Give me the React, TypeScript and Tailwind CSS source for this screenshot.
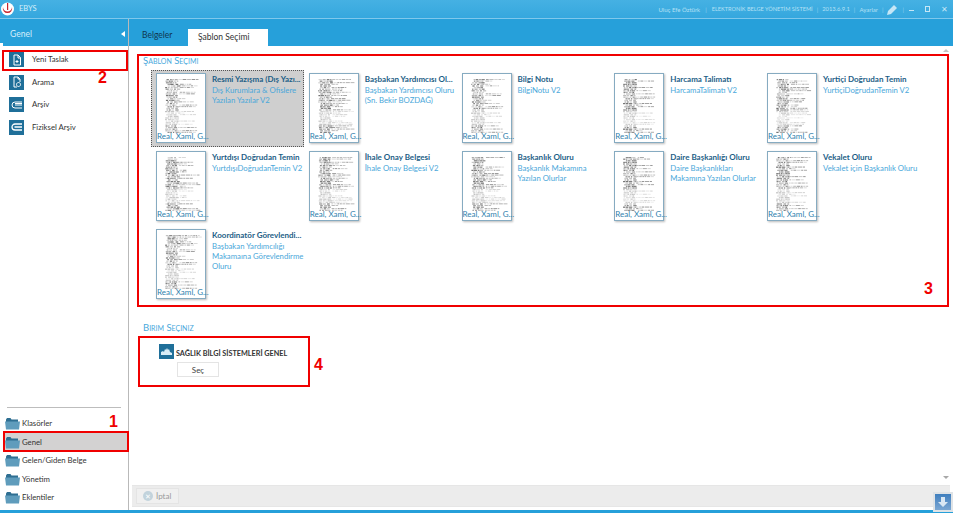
import React from "react";

const templates = [
  { title: "Resmi Yazışma (Dış Yazı...", lines: ["Dış Kurumlara & Ofislere", "Yazılan Yazılar V2"], selected: true },
  { title: "Başbakan Yardımcısı Ol...", lines: ["Başbakan Yardımcısı Oluru", "(Sn. Bekir BOZDAĞ)"] },
  { title: "Bilgi Notu", lines: ["BilgiNotu V2"] },
  { title: "Harcama Talimatı", lines: ["HarcamaTalimatı V2"] },
  { title: "Yurtiçi Doğrudan Temin", lines: ["YurtiçiDoğrudanTemin V2"] },
  { title: "Yurtdışı Doğrudan Temin", lines: ["YurtdışıDoğrudanTemin V2"] },
  { title: "İhale Onay Belgesi", lines: ["İhale Onay Belgesi V2"] },
  { title: "Başkanlık Oluru", lines: ["Başkanlık Makamına", "Yazılan Olurlar"] },
  { title: "Daire Başkanlığı Oluru", lines: ["Daire Başkanlıkları", "Makamına Yazılan Olurlar"] },
  { title: "Vekalet Oluru", lines: ["Vekalet için Başkanlık Oluru"] },
  { title: "Koordinatör Görevlendi...", lines: ["Başbakan Yardımcılığı", "Makamaına Görevlendirme", "Oluru"] },
];

const sideItems = ["Klasörler", "Genel", "Gelen/Giden Belge", "Yönetim", "Eklentiler"];

// sahte belge satırları: küçültülmüş taranmış sayfa gibi dağınık parçalar
function DocLines({ seed }: { seed: number }) {
  const rows: React.ReactNode[] = [];
  let s = seed * 37 + 11;
  const next = () => {
    s = (s * 73 + 41) % 1009;
    return s / 1009;
  };
  for (let y = 5; y < 58; y += 1.6) {
    const fade = y > 36 && y < 50 ? 0.45 : 1;
    let x = 8 + next() * 3;
    while (x < 20) {
      const w = 1.2 + next() * 2.2;
      rows.push(
        <rect key={"l" + y + x} x={x} y={y} width={w} height={1.2} fill="#444" opacity={(0.2 + next() * 0.55) * fade} />
      );
      x += w + next() * 1.4;
    }
    if (next() > 0.35) {
      let rx = 21 + next() * 2;
      const end = 26 + next() * 17;
      while (rx < end) {
        const w = 1.2 + next() * 3;
        rows.push(
          <rect key={"r" + y + rx} x={rx} y={y} width={w} height={0.9} fill="#555" opacity={(0.2 + next() * 0.5) * fade} />
        );
        rx += w + 0.7;
      }
    }
  }
  return (
    <svg width="48" height="68" viewBox="0 0 48 68" className="block">
      <rect width="48" height="68" fill="#fff" />
      {rows}
    </svg>
  );
}

function Thumb({ seed }: { seed: number }) {
  return (
    <div className="relative h-[70px] w-[50px] shrink-0 border border-[#86abc1] bg-white shadow-[1px_1px_2px_#bbb]">
      <DocLines seed={seed} />
      <span className="absolute bottom-0 left-0 whitespace-nowrap text-[8px] leading-[11px] text-[#2f7fae]">
        Real, Xaml, G...
      </span>
    </div>
  );
}

function NavIcon({ kind }: { kind: number }) {
  return (
    <div className="flex h-[15px] w-[15px] items-center justify-center bg-[#1f6f99]">
      <svg width="12" height="12" viewBox="0 0 12 12" fill="none" stroke="#fff" strokeWidth="1">
        {kind === 0 && <path d="M3 1h4l2.500 2.500V11H3zM7 1v3h2.500M4.500 7.500h3M6 6v3" />}
        {kind === 1 && <path d="M3 1h4l2 2v3M3 1v10h3M7 1v2h2M7.500 6.500a2 2 0 1 0 .01 0" />}
        {kind === 2 && <path d="M11 3H4a2.500 2.500 0 0 0 0 6h7M4 6h7M4 4.500h7" />}
        {kind === 3 && <path d="M11 3H4a3 3 0 0 0 0 6h7M3.500 6H11" strokeWidth="1.300" />}
      </svg>
    </div>
  );
}

function Folder() {
  return (
    <svg width="15" height="13" viewBox="0 0 15 13" className="shrink-0">
      <path d="M1 2.500 2 1h3.500l1 1.500H13V5H1z" fill="#2f6f92" />
      <path d="M0 4.500h15l-1 8H1z" fill="#5f9cbc" />
    </svg>
  );
}

export default function App() {
  return (
    <div className="relative flex h-[513px] w-[953px] flex-col overflow-hidden bg-white font-['Lato',sans-serif]">
      {/* title bar */}
      <div className="flex h-[19px] items-center border-b border-[#7fc8ec] bg-gradient-to-b from-[#45b1e3] to-[#35a7de] pr-[5px] text-[6px] text-[#b5e0f5]">
        <svg width="13" height="16" viewBox="0 0 13 16" className="ml-[1px]">
          <circle cx="6.500" cy="8" r="6.500" fill="#fff" />
          <path d="M2 6a4.700 4.700 0 1 0 9 0 4 4 0 0 1-9 0z" fill="#c8232c" />
          <rect x="6" y="2" width="1.200" height="7" fill="#c8232c" />
        </svg>
        <span className="ml-[5px] text-[7.500px] text-[#d5eefa]">EBYS</span>
        <div className="ml-auto flex items-center">
          <span>Uluç Efe Öztürk</span>
          <span className="mx-[5px] text-[#8fd0ef]">|</span>
          <span className="text-[5.600px]">ELEKTRONİK BELGE YÖNETİM SİSTEMİ</span>
          <span className="mx-[4px] text-[#8fd0ef]">|</span>
          <span className="text-[5.800px]">2013.6.9.1</span>
          <span className="mx-[4px] text-[#8fd0ef]">|</span>
          <span>Ayarlar</span>
          <span className="mx-[4px] text-[#8fd0ef]">|</span>
          <svg width="11" height="11" viewBox="0 0 11 11" fill="#c5e6f6"><path d="M0 11l1-4 6-6 3 3-6 6z" /></svg>
          <span className="ml-[4px] mr-[5px] text-[#8fd0ef]">|</span>
          <span className="mt-[3px] h-[1.500px] w-[5px] bg-[#c5e6f6]" />
          <span className="ml-[11px] h-[6px] w-[5px] border border-[#c5e6f6]" />
          <span className="ml-[11px] text-[8px] leading-none text-[#c5e6f6]">✕</span>
        </div>
      </div>

      <div className="flex min-h-0 flex-1">
        {/* sol menü */}
        <aside className="flex w-[129px] shrink-0 flex-col border-r border-[#b9b9b9]">
          <div className="flex h-[24px] items-center justify-between bg-[#26a0da] pl-[10px] pr-[3px] pt-[6px] text-[8.500px] text-[#d5eefa]">
            <span>Genel</span>
            <span className="h-0 w-0 border-y-[3px] border-r-[4px] border-y-transparent border-r-white" />
          </div>
          <div className="ml-[3px] h-[3px] bg-[#26a0da]" />
          <div className="mt-[6px] flex flex-col gap-[7.500px] pl-[9px]">
            {["Yeni Taslak", "Arama", "Arşiv", "Fiziksel Arşiv"].map((label, i) => (
              <div key={label} className="flex h-[15px] items-center gap-[8px] text-[7.750px] text-[#333]">
                <NavIcon kind={i} />
                <span className="mt-[1px]">{label}</span>
              </div>
            ))}
          </div>
          <div className="mx-[7px] mt-auto border-t border-[#bdbdbd]" />
          <div className="mb-[3px] mt-[6px] flex flex-col">
            {sideItems.map((label) => (
              <div
                key={label}
                className={
                  label === "Genel"
                    ? "ml-[3px] flex h-[19px] items-center gap-[2px] bg-[#d3d2d2] pl-[2px] text-[7.750px] text-[#333]"
                    : "ml-[3px] flex h-[18.500px] items-center gap-[2px] pl-[2px] text-[7.750px] text-[#333]"
                }
              >
                <Folder />
                <span className="mt-[1px]">{label}</span>
              </div>
            ))}
          </div>
        </aside>

        <main className="flex min-w-0 flex-1 flex-col">
          {/* sekmeler */}
          <div className="flex h-[27px] items-end bg-[#26a0da] pl-[13px] text-[8.500px]">
            <span className="mb-[4px] w-[46px] text-[#10374f]">Belgeler</span>
            <span className="flex h-[17px] w-[80px] items-center bg-white pl-[10px] text-[#333]">Şablon Seçimi</span>
          </div>

          <div className="flex-1 px-[14px] pt-[9px]">
            <h2 className="text-[9.500px] leading-[12px] text-[#49a9dc] [font-variant:small-caps]">Şablon Seçımı</h2>
            <div className="ml-[8px] mt-[3px] grid auto-rows-[78px] grid-cols-[repeat(5,152.750px)]">
              {templates.map((t, i) => (
                <div
                  key={t.title}
                  className={
                    t.selected
                      ? "flex h-[77px] border border-dotted border-[#555] bg-[#cfcfcf] pl-[4px] pt-[2px]"
                      : "flex h-[77px] pl-[5px] pt-[3px]"
                  }
                >
                  <Thumb seed={i + 1} />
                  <div className="ml-[6px] min-w-0 pt-[1px]">
                    <p className="whitespace-nowrap text-[8px] font-bold leading-[11px] text-[#1c5e86]">{t.title}</p>
                    {t.lines.map((line) => (
                      <p key={line} className="whitespace-nowrap text-[7.750px] leading-[10px] text-[#4aa7da]">
                        {line}
                      </p>
                    ))}
                  </div>
                </div>
              ))}
            </div>

            <h2 className="mt-[18px] text-[9.500px] leading-[12px] text-[#49a9dc] [font-variant:small-caps]">Bırım Seçınız</h2>
            <div className="ml-[16px] mt-[10px]">
              <div className="flex items-end">
                <div className="flex h-[15px] w-[15px] items-center justify-center bg-[#1f6f99]">
                  <svg width="11" height="7" viewBox="0 0 11 7" fill="#d8ecf6"><path d="M0 7V4l2-1 1 1 1-3 1 1 1-2 1 2 1-1 1 3 2 1v2z" /></svg>
                </div>
                <span className="ml-[2px] text-[7.250px] font-bold leading-[10px] text-[#333]">SAĞLIK BİLGİ SİSTEMLERİ GENEL</span>
              </div>
              <div className="ml-[18px] mt-[3px] flex h-[15px] w-[42px] items-center justify-center border border-[#e4e4e4] text-[8px] text-[#444]">
                Seç
              </div>
            </div>
          </div>

          {/* alt araç çubuğu */}
          <div className="mb-[3px] ml-[3px] mr-[3px] flex h-[22px] items-center border-y border-[#e6e6e6] bg-[#ececec] pl-[4px]">
            <div className="flex h-[16px] w-[43px] items-center gap-[3px] border border-[#e4e4e4] bg-[#f0f0f0] pl-[6px] text-[8px] text-[#9a9a9a]">
              <span className="flex h-[10px] w-[10px] items-center justify-center rounded-full bg-[#c2d3dc] text-[7px] leading-none text-white">✕</span>
              İptal
            </div>
          </div>
        </main>
      </div>

      <div className="h-[3px] bg-[#26a0da]" />

      {/* kaydırma okları */}
      <span className="absolute left-[943px] top-[49px] h-0 w-0 border-x-[3px] border-b-[3px] border-x-transparent border-b-[#c4c4c4]" />
      <span className="absolute left-[943px] top-[476px] h-0 w-0 border-x-[3px] border-t-[3px] border-x-transparent border-t-[#a8a8a8]" />

      {/* aşağı indirme butonu */}
      <div className="absolute left-[933px] top-[492px] flex h-[20px] w-[20px] items-center justify-center border-2 border-[#dfe3e6] bg-gradient-to-b from-[#3f7fbe] to-[#7aa6d2]">
        <svg width="10" height="10" viewBox="0 0 10 10" fill="#d9e7f3"><path d="M3 0h4v5h3L5 10 0 5h3z" /></svg>
      </div>

      {/* kırmızı işaretler */}
      <div className="absolute left-[2px] top-[50px] h-[21px] w-[126px] border-2 border-[#f00000]" />
      <div className="absolute left-[137px] top-[54px] h-[253px] w-[812px] border-2 border-[#f00000]" />
      <div className="absolute left-[138px] top-[336px] h-[51px] w-[172px] border-2 border-[#f00000]" />
      <div className="absolute left-[3px] top-[431px] h-[21px] w-[126px] border-2 border-[#f00000]" />
      <span className="absolute left-[98px] top-[69px] font-['Liberation_Sans',sans-serif] text-[16px] font-bold leading-[17px] text-[#f00000]">2</span>
      <span className="absolute left-[924px] top-[280px] font-['Liberation_Sans',sans-serif] text-[16px] font-bold leading-[17px] text-[#f00000]">3</span>
      <span className="absolute left-[314px] top-[356px] font-['Liberation_Sans',sans-serif] text-[16px] font-bold leading-[17px] text-[#f00000]">4</span>
      <span className="absolute left-[109px] top-[413px] font-['Liberation_Sans',sans-serif] text-[16px] font-bold leading-[17px] text-[#f00000]">1</span>
    </div>
  );
}
